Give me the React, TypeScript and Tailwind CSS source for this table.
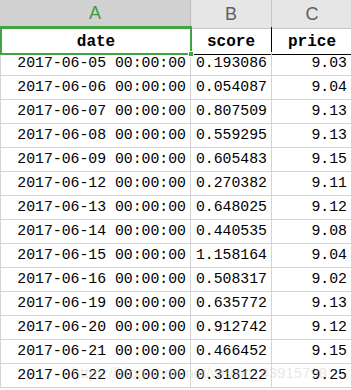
const rows: [string, string, string][] = [
  ['2017-06-05 00:00:00', '0.193086', '9.03'],
  ['2017-06-06 00:00:00', '0.054087', '9.04'],
  ['2017-06-07 00:00:00', '0.807509', '9.13'],
  ['2017-06-08 00:00:00', '0.559295', '9.13'],
  ['2017-06-09 00:00:00', '0.605483', '9.15'],
  ['2017-06-12 00:00:00', '0.270382', '9.11'],
  ['2017-06-13 00:00:00', '0.648025', '9.12'],
  ['2017-06-14 00:00:00', '0.440535', '9.08'],
  ['2017-06-15 00:00:00', '1.158164', '9.04'],
  ['2017-06-16 00:00:00', '0.508317', '9.02'],
  ['2017-06-19 00:00:00', '0.635772', '9.13'],
  ['2017-06-20 00:00:00', '0.912742', '9.12'],
  ['2017-06-21 00:00:00', '0.466452', '9.15'],
  ['2017-06-22 00:00:00', '0.318122', '9.25'],
]

const grid = 'grid grid-cols-[191px_81px_80px]'
const cell = 'h-[24px] flex items-center justify-end pr-[4px] border-r border-b border-[#d4d4d4]'

export default function App() {
  return (
    <div className="relative w-[351px] h-[390px] overflow-hidden bg-white text-black font-['Liberation_Mono',monospace] text-[14.8px]">
      {/* column letters */}
      <div className={`${grid} h-[27px] font-['Liberation_Sans',sans-serif] text-[18px]`}>
        <div className="flex items-center justify-center bg-[#d2d2d2] border-r border-b-2 border-r-[#bdbdbd] border-b-[#3fa33f] text-[#3d9a3d]">
          A
        </div>
        <div className="flex items-center justify-center bg-[#e6e6e6] border-r border-b border-[#c6c6c6] text-[#606060]">
          B
        </div>
        <div className="flex items-center justify-center bg-[#e6e6e6] border-b border-[#c6c6c6] text-[#606060]">
          C
        </div>
      </div>

      {/* header row */}
      <div className={`${grid} h-[25px] font-bold text-[16px]`}>
        <div className="relative flex items-center justify-center pt-[3px] border-b border-black border-l border-l-[#d4d4d4]">
          date
          <div className="absolute -left-px -top-px -right-px -bottom-px border-2 border-[#43a243]" />
          <div className="absolute -right-[3px] -bottom-[3px] w-[6px] h-[6px] bg-[#43a243] border border-white" />
        </div>
        <div className="flex items-center justify-center pt-[3px] border-b border-r border-black">score</div>
        <div className="flex items-center justify-center pt-[3px] border-b border-black">price</div>
      </div>

      {rows.map(([d, s, p]) => (
        <div key={d} className={grid}>
          <div className={`${cell} border-l`}>{d}</div>
          <div className={cell}>{s}</div>
          <div className={cell}>{p}</div>
        </div>
      ))}

      <div className="absolute left-[72px] top-[362px] font-['Liberation_Sans',sans-serif] text-[15px] text-[#c8c8c8] opacity-40 pointer-events-none">
        https://blog.csdn.net/weixin_43915798
      </div>
    </div>
  )
}
